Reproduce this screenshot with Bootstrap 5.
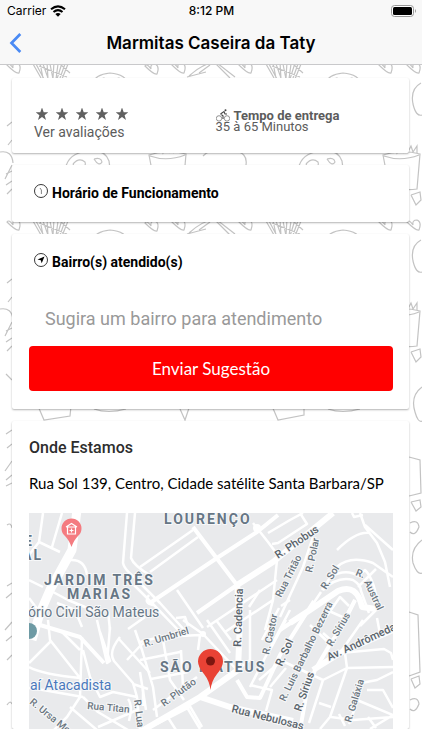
<!DOCTYPE html>
<html lang="pt-BR">
<head>
<meta charset="utf-8">
<meta name="viewport" content="width=device-width, initial-scale=1">
<title>Marmitas Caseira da Taty</title>
<link href="https://cdn.jsdelivr.net/npm/bootstrap@5.3.0/dist/css/bootstrap.min.css" rel="stylesheet">
<style>
body{font-family:Roboto,"Liberation Sans",sans-serif;background:#fff;color:#000;font-size:14px;line-height:16px}
.top-bar{background:#f8f8f8;border-bottom:1px solid #c9c9cb;font-family:Inter,sans-serif}
.status{font-size:12px;line-height:22px;padding:0 6px 0 7px}
.status>*{flex:1 1 0}
.clock{font-weight:500}
.title-row{height:42px}
.title-row h1{font-size:17px;line-height:24px;font-weight:600}
.side{width:48px}
.back{padding:0 9px;line-height:1}
.doodles{position:absolute;inset:0;width:100%;height:100%;z-index:-1}
.page{position:relative;z-index:0;overflow:hidden;padding:13px 13px 0 12px;display:flex;flex-direction:column;gap:12px}
.panel{background:#fff;border-radius:2px;box-shadow:0 1px 2px rgba(0,0,0,.3)}
.info{padding:28px 22px 13px;color:#5c5c5c}
.info>*{flex:1 1 0}
.info a{color:inherit}
.stars{gap:8px;padding:2px 2px 0}
.delivery{line-height:10px;padding:3px 0 0 10px;font-size:13px}
.head{font-size:14px;line-height:20px;font-weight:700}
.hours{padding:18px 22px 19px}
.areas{padding:18px 16px 18px 17px}
.areas .head{padding:0 5px}
.suggest{border:0;font-size:18px;line-height:24px;padding:8px 16px;margin-top:27px;color:#333;background:transparent;width:100%}
.suggest::placeholder{color:#999;opacity:1}
.send{background:red;color:#fff;border:0;border-radius:4px;height:45px;font:17px/24px Lato,sans-serif;margin-top:7px}
.send:hover{background:#d90000;color:#fff}
.place{padding:16px 16px 0 17px}
.place h2{font-size:16px;line-height:22px;font-weight:500;color:#2d2d2d}
.address{font:15px/20px Lato,sans-serif;margin-top:14px;margin-bottom:20px}
.map text{fill:#6b7680;stroke:#f7f8f9;stroke-width:2px;paint-order:stroke;font-size:10px;font-weight:500}
.map .zone{fill:#667685;font-size:14px;font-weight:700;letter-spacing:2px}
.map .spot{fill:#667685;font-size:14px;font-weight:400}
.map .main-road{fill:#59636b;font-size:11px}
.map .shop{fill:#4a78bc;font-size:14px;font-weight:400}
</style>
<script src="https://cdn.jsdelivr.net/npm/bootstrap@5.3.0/dist/js/bootstrap.bundle.min.js"></script>
</head>
<body>
<header class="top-bar">
  <div class="status d-flex align-items-center">
    <div class="d-flex align-items-center gap-1"><span>Carrier</span>
      <svg width="16" height="12" viewBox="0 0 16 12" aria-hidden="true"><g fill="none" stroke="#000" stroke-width="2.1"><path d="M1 4.3Q8-1.7 15 4.3M3.5 7Q8 3.2 12.5 7"/></g><path d="M8 11.7 5.3 9Q8 6.9 10.7 9Z"/></svg>
    </div>
    <div class="clock text-center">8:12 PM</div>
    <div class="d-flex justify-content-end">
      <svg width="25" height="12" viewBox="0 0 25 12" aria-hidden="true"><rect x=".5" y=".5" width="22" height="11" rx="3" fill="#fff" stroke="#999"/><rect x="2" y="2" width="19" height="8" rx="1.5"/><path d="M24 4Q26 6 24 8Z" fill="#999"/></svg>
    </div>
  </div>
  <div class="title-row d-flex align-items-center justify-content-between">
    <div class="side"><button class="back btn border-0" type="button" aria-label="Voltar"><svg width="13" height="20" viewBox="0 0 13 20"><path d="M11.3 1 2.5 10l8.8 9" fill="none" stroke="#4a8af4" stroke-width="2.7"/></svg></button></div>
    <h1 class="m-0 text-center">Marmitas Caseira da Taty</h1>
    <div class="side"></div>
  </div>
</header>

<main class="page">
  <svg class="doodles" viewBox="0 65 422 664" preserveAspectRatio="xMinYMin slice" aria-hidden="true">
    <defs>
      <g id="heart"><path d="M0 0Q9 9 12 8Q15 0 10-2Q5-2 6 3Q2-3 0 0Z"/></g>
      <g id="fries"><path d="M0 0 8 14M3 0 11 15M7-1 10 14M10 0 15 14M14-2 15 15M17 0 20 15M21-2 20 14M25 0 23 15M29-1 24 15M32 0 27 14M35 0 29 15M6 2 34 13M27 0 37 9"/></g>
      <g id="face"><path d="M0 14Q5 2 20 1Q36 2 40 14M12 7q2-2 3 0M27 7q2-2 3 0"/></g>
      <g id="pot"><path d="M0 4Q18-2 37 3L34 38Q20 40 6 35ZM1 5Q18 11 36 4M5 3 7-5 10 1 12-6 14 2 17-5 20 1 23-7 25 1 28-5 30 1 34-5 34 2"/></g>
      <g id="cookie"><path d="M0 22Q1 6 17 2Q39-3 44 11Q48 28 22 32Q5 31 0 22M8 14q6-7 12-2q2 5-5 5q-6 1-7-3M29 9q7-2 8 3q-3 5-8-3M19 24q4-3 6 0"/></g>
      <g id="row">
        <use href="#fries" x="33" y="0"/><use href="#face" x="90" y="8"/><use href="#heart" x="145" y="2"/><use href="#heart" x="172" y="1"/>
        <path d="M189 12Q202 0 215-2M199 9 210 1M214-2 230 14M217-1 235 13M187 13 206 8"/>
        <use href="#heart" x="239" y="1"/><use href="#fries" x="266" y="0"/><use href="#face" x="323" y="8"/><use href="#heart" x="379" y="1"/><use href="#heart" x="407" y="1"/><use href="#heart" x="7" y="1"/>
        <path d="M421 19Q410 25 413 40Q416 53 422 51M7 62 12 58M8 81 12 76M5 115 12 101M6 110 12 107M6 121 12 117M7 130 12 125"/>
        <use href="#cookie" x="65" y="86"/><use href="#cookie" x="298" y="86"/><use href="#pot" x="149" y="87"/><use href="#pot" x="383" y="87"/>
        <path d="M203 92Q211 83 233 87Q248 88 246 101M411 131l9-3 1 8-5 5-5-10M0 88Q12 86 13 99"/>
      </g>
    </defs>
    <g fill="none" stroke="#aaa" stroke-width="1.2" stroke-opacity=".7">
      <use href="#row" y="64"/><use href="#row" y="221"/>
      <path d="M38 406 44 420 70 416 71 406M94 409Q108 414 126 409M180 409 185 420 189 408M272 406 278 420 304 415 304 406M328 409Q342 414 360 409M422 387Q410 396 415 412Q418 423 422 421M6 374 12 380"/>
      <path d="M6 434 12 430M7 448 12 444M5 471 12 461M6 480 12 475M6 486 12 483M409 457 420 460 421 493 409 496M411 502l9-2 1 7-5 4-5-9M410 523q8-4 9 4-4 10-9 5M422 540Q410 549 413 563Q417 575 422 573M7 525q4-3 5 3M7 586 12 583M6 598 12 593M5 630 12 622M6 641 12 636M7 660 12 655M7 705q3-5 5-1M409 612 418 615 420 672 409 676M411 679l8-3 1 8-5 4-4-9M410 700q8-4 9 4-4 10-9 5"/>
    </g>
  </svg>

  <section class="panel info d-flex">
    <div>
      <div class="stars d-flex" role="img" aria-label="5 estrelas">
        <svg width="12" height="12" viewBox="0 0 12 12"><path id="star" fill="#606060" d="m6-.5 1.700 4.700h4.800L8.600 7.200 10 12 6 9.100 2 12 3.400 7.200-.5 4.200h4.800Z"/></svg>
        <svg width="12" height="12" viewBox="0 0 12 12"><use href="#star"/></svg>
        <svg width="12" height="12" viewBox="0 0 12 12"><use href="#star"/></svg>
        <svg width="12" height="12" viewBox="0 0 12 12"><use href="#star"/></svg>
        <svg width="12" height="12" viewBox="0 0 12 12"><use href="#star"/></svg>
      </div>
      <a href="#avaliacoes" class="d-block text-decoration-none mt-1">Ver avaliações</a>
    </div>
    <div class="delivery">
      <div class="d-flex align-items-center"><svg class="me-1" width="14" height="13" viewBox="0 0 14 13" fill="none" stroke="#777" aria-hidden="true"><circle cx="3" cy="9.4" r="2.7" stroke-width=".8"/><circle cx="11" cy="9.4" r="2.7" stroke-width=".8"/><path d="M4.500 5 8 2.500 9 5h2M4.500 5 7 6.800V10" stroke="#444" stroke-width="1.1"/><circle cx="9.5" cy="1.3" r="1" fill="#444" stroke="none"/></svg><strong>Tempo de entrega</strong></div>
      <div>35 à 65 Minutos</div>
    </div>
  </section>

  <section class="panel hours">
    <h2 class="head m-0 d-flex align-items-center"><svg class="me-1 mb-1" width="14" height="14" viewBox="0 0 14 14" fill="none" stroke="#222" stroke-width=".9" aria-hidden="true"><circle cx="7" cy="7" r="6.5"/><path d="m6 4 1.400 2v4" stroke="#777"/></svg>Horário de Funcionamento</h2>
  </section>

  <section class="panel areas">
    <h2 class="head m-0 d-flex align-items-center"><svg class="me-1 mb-1" width="14" height="14" viewBox="0 0 14 14" aria-hidden="true"><circle cx="7" cy="7" r="6.5" fill="none" stroke="#222" stroke-width=".9"/><path d="M10.500 3.500 7.700 10.300 6.800 7.300 3.500 6.600Z"/></svg>Bairro(s) atendido(s)</h2>
    <form>
      <input class="suggest d-block" type="text" aria-label="Sugira um bairro para atendimento" placeholder="Sugira um bairro para atendimento">
      <button class="send btn w-100" type="button">Enviar Sugestão</button>
    </form>
  </section>

  <section class="panel place">
    <h2 class="m-0">Onde Estamos</h2>
    <p class="address">Rua Sol 139, Centro, Cidade satélite Santa Barbara/SP</p>
    <svg class="map d-block w-100" viewBox="29 513 364 216" role="img" aria-label="Mapa">
      <rect x="29" y="513" width="364" height="216" fill="#e9eaec"/>
      <g fill="none" stroke="#fff" stroke-linejoin="round">
        <g stroke-width="2.5">
          <path d="M43 513 39 542 60 552M62 513 52 547M39 542 29 555M70 560Q85 559 87 575M29 580 43 587M53 592 68 600 85 607 99 611M57 603 75 610 82 627M29 598 38 610"/>
          <path d="M127 513 123 563Q125 572 143 583M135 513 131 558Q134 566 150 575M108 611 110 630"/>
          <path d="M140 567 193 530M150 572 198 537M177 590 203 628M253 523 268 542 277 554M268 533 290 520 303 513M272 544 278 543 307 524 300 513M140 583 160 603 187 633M134 585 153 604 181 633M149 595Q143 603 153 605M176 618 185 617 188 626M207 627 277 580M277 560 273 600 265 630M273 600 225 632M313 537 303 567 280 617"/>
          <path d="M337 550Q356 531 370 533M360 513 365 527 377 543 385 562 390 587M365 525 393 550M352 513 354 517 363 515M322 590 337 567Q350 555 373 563L393 577M323 590Q337 576 353 580 361 585 361 591L369 613M329 577Q347 568 358 576L365 570Q375 580 378 608L360 626M358 587 376 569M317 630 340 597 349 606"/>
          <path d="M48 620 50 640 80 678M29 663 50 642M29 667Q42 674 80 678M82 637 80 697M83 650 90 677 100 697 113 692 137 697M97 620 107 663 110 661 100 632M110 627 107 663M120 637Q108 652 114 661L133 683 137 697 140 730M118 638 150 673M127 660 141 645 150 640M128 629 145 617M62 632 80 650M80 697 67 717 54 730M83 697 98 712 128 730M70 707 97 730M98 727 137 710M29 688 43 690 83 697M133 684 148 689M143 689 143 706M128 699Q133 705 129 721"/>
          <path d="M140 642 160 637 200 635M135 630 142 650 153 687 157 717M153 710 197 677M163 640 170 680 184 700M140 660 180 652M151 679 188 672M181 650 183 687M200 635 198 650M202 633 237 670M207 620 230 653M183 620 203 634M250 610 250 660 237 670M216 620 231 640M249 607 260 590M250 687 269 650 290 610M140 672 146 710M167 716 176 730M185 704 200 729M157 724 190 707M188 703 202 727"/>
          <path d="M280 660 323 680 347 668 393 667M347 668 330 717 320 729M323 680 309 723M319 703 331 707M345 653 347 668M340 653 384 649 391 653 393 660M363 620 340 653M377 618 380 634M339 714 345 726M356 684 377 680 393 672M357 700 393 715M367 690 383 690 393 708M370 729 393 715M331 717 353 720 393 717M368 717 376 728M310 625 330 644M323 633 332 641M355 708 349 724"/>
          <path d="M279 608 262 640M338 629 355 600M301 622 321 592M329 611 347 619M270 650 286 620M259 680 280 662M270 687 286 668M250 685 272 690 266 711M290 600 281 606" />
        </g>
        <g stroke-width="4">
          <path d="M150 603 217 558 257 532 278 515M193 527 237 585M197 613 237 585M40 625 80 637 104 663"/>
          <path d="M237 680 247 697 260 698 280 655 314 601M240 605 238 670M300 730 307 691 315 670 329 646 342 626 355 600M280 630 310 610"/>
        </g>
        <g stroke-width="6"><path d="M237 585 273 562 333 513M290 623 310 610 338 591Q357 583 362 607L376 609M237 583 240 620 238 670M200 697 230 707 293 721M313 670 340 653 393 630M140 732 200 697 238 670"/></g>
        <path d="M77 510 72 550 50 590 40 613 32 640" stroke-width="9"/>
      </g>
      <circle cx="257" cy="528" r="4" fill="#fff"/><circle cx="203" cy="634" r="3" fill="#fff"/>
      <path d="M29 623a8 8 0 0 1 0 16Z" fill="#6e9aa4"/>
      <text class="zone" x="164" y="524">LOURENÇO</text>
      <text class="zone" x="44" y="585">JARDIM TRÊS</text>
      <text class="zone" x="67" y="599">MARIAS</text>
      <text class="zone" x="24" y="546">E</text>
      <text class="zone" x="22" y="560">AL</text>
      <text class="zone" x="160" y="672">SÃO MATEUS</text>
      <text class="spot" x="28" y="617">ório Civil São Mateus</text>
      <text class="shop" x="30" y="690">aí Atacadista</text>
      <text class="main-road" transform="translate(278 559) rotate(-34)">R. Phobus</text>
      <text transform="translate(312 573) rotate(-78)">R. Polar</text>
      <text transform="translate(281 598) rotate(-63)">Rua Tritão</text>
      <text transform="translate(326 590) rotate(-58)">R. Sol</text>
      <text transform="translate(355 575) rotate(22)">R.</text>
      <text transform="translate(364 582) rotate(65)">Austral</text>
      <text class="main-road" transform="translate(241 647) rotate(-88)">R. Cadencia</text>
      <text transform="translate(269 655) rotate(-78)">R. Castor</text>
      <text class="main-road" transform="translate(282 667) rotate(-66)">R. Sol</text>
      <text transform="translate(285 702) rotate(-64)">R. Luis Barbalho Bezerra</text>
      <text class="main-road" transform="translate(301 712) rotate(-71)">R. Sírius</text>
      <text transform="translate(332 647) rotate(-60)">R. Sírius</text>
      <text class="main-road" transform="translate(329 661) rotate(-25)">Av. Andrômeda</text>
      <text transform="translate(351 723) rotate(-73)">R. Galáxia</text>
      <text transform="translate(145 647) rotate(-17)">R. Umbriel</text>
      <text transform="translate(164 707) rotate(-36)">R. Plutão</text>
      <text transform="translate(29 703) rotate(39)">R. Ursa Menor</text>
      <text transform="translate(87 709) rotate(5)">Rua Titan</text>
      <text transform="translate(134 700) rotate(83)">R. Lua</text>
      <text class="main-road" transform="translate(231 712) rotate(14)">Rua Nebulosas</text>
      <path d="M71.500 547Q69 540 65 536A10 10 0 1 1 78 536Q74 540 71.500 547Z" fill="#f47b80"/>
      <path d="M66 527 71.500 523.500 77 527M67.500 527v7h8v-7ZM71.500 528.500v4M69.500 530.500h4" fill="none" stroke="#fff" stroke-width="1.200"/>
      <path d="M210.500 690Q209.500 681 204 674Q198 667 198 661.500A12.500 12.500 0 0 1 223 661.500Q223 667 217 674Q211.500 681 210.500 690Z" fill="#e94235"/>
      <circle cx="210.500" cy="661" r="4.500" fill="#7d1610"/>
    </svg>
  </section>
</main>
</body>
</html>
